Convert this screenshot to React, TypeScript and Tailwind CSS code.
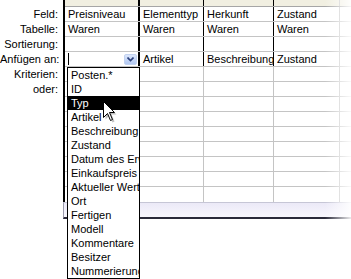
import React from "react";

const labels = ["Feld:", "Tabelle:", "Sortierung:", "Anfügen an:", "Kriterien:", "oder:"];

const items = [
  "Posten.*",
  "ID",
  "Typ",
  "Artikel",
  "Beschreibung",
  "Zustand",
  "Datum des Erwerbs",
  "Einkaufspreis",
  "Aktueller Wert",
  "Ort",
  "Fertigen",
  "Modell",
  "Kommentare",
  "Besitzer",
  "Nummerierung",
];

const topRows: (string | null)[][] = [
  ["Preisniveau", "Elementtyp", "Herkunft", "Zustand"],
  ["Waren", "Waren", "Waren", "Waren"],
  ["", "", "", ""],
  [null, "Artikel", "Beschreibung", "Zustand"],
];

function Cursor() {
  return (
    <svg
      className="absolute left-[103px] top-[101px]"
      width="16"
      height="23"
      viewBox="0 0 16 23"
    >
      <path d="M2.5 2.5 L2.5 18.5 L6.5 14.5 L9.5 21.5 L11.5 20.5 L8.5 13.5 L13.5 13.5 Z" fill="#000" opacity="0.25" />
      <path d="M0.5 0.5 L0.5 16.5 L4.5 12.5 L7.5 19.5 L9.5 18.5 L6.5 11.5 L11.5 11.5 Z" fill="#fff" stroke="#000" strokeWidth="1" strokeLinejoin="miter" />
    </svg>
  );
}

export default function App() {
  const font = { fontFamily: '"Liberation Sans", Arial, sans-serif' };
  return (
    <div className="relative w-[351px] h-[279px] bg-white overflow-hidden text-[11px] text-black" style={font}>
      <div className="flex">
        <div className="w-[63px] shrink-0 pt-[7px]">
          {labels.map((l) => (
            <div key={l} className="h-[15px] leading-[15px] text-right pr-[5px] whitespace-nowrap">
              {l}
            </div>
          ))}
        </div>
        <div className="flex-1 flex flex-col">
          <div className="border-l-2 border-black">
            <div className="grid grid-cols-[75px_64px_70px_66px_1fr] h-[7px] bg-[#f1efe1] border-b border-[#a6a6a6]">
              <div className="border-r-2 border-black" />
              <div className="border-r border-black" />
              <div className="border-r border-black" />
              <div className="border-r border-[#c4c4c4]" />
              <div />
            </div>
            {topRows.map((r, i) => (
              <div key={i} className="grid grid-cols-[75px_64px_70px_66px_1fr] h-[15px] border-b border-[#c4c4c4]">
                {r[0] === null ? (
                  <div className="border-r-2 border-black flex items-center justify-between pl-[3px] pr-[1px]">
                    <div className="w-px h-[12px] bg-black" />
                    <div className="w-[13px] h-[11px] rounded-[2px] bg-gradient-to-b from-[#dbe6fb] to-[#b2c8f2] border border-[#c2d2f0] flex items-center justify-center">
                      <svg width="7" height="5" viewBox="0 0 7 5">
                        <path d="M0.5 0.5 L3.5 3.5 L6.5 0.5" fill="none" stroke="#2a3f7a" strokeWidth="1.6" />
                      </svg>
                    </div>
                  </div>
                ) : (
                  <div className="border-r-2 border-black pl-[3px] leading-[14px] whitespace-nowrap overflow-hidden">{r[0]}</div>
                )}
                <div className="border-r border-black pl-[3px] leading-[14px] whitespace-nowrap overflow-hidden">{r[1]}</div>
                <div className="border-r border-black pl-[3px] leading-[14px] whitespace-nowrap overflow-hidden">{r[2]}</div>
                <div className="border-r border-[#c4c4c4] pl-[3px] leading-[14px] whitespace-nowrap overflow-hidden">{r[3]}</div>
                <div />
              </div>
            ))}
            {Array.from({ length: 9 }).map((_, i) => (
              <div
                key={i}
                className={
                  i === 8
                    ? "grid grid-cols-[75px_64px_70px_66px_1fr] h-[15px]"
                    : "grid grid-cols-[75px_64px_70px_66px_1fr] h-[15px] border-b border-[#c4c4c4]"
                }
              >
                <div className="border-r-2 border-black" />
                <div className="border-r border-[#c4c4c4]" />
                <div className="border-r border-[#c4c4c4]" />
                <div className="border-r border-[#c4c4c4]" />
                <div />
              </div>
            ))}
          </div>
          <div className="h-[17px] border-l border-[#9a9aac] border-t border-t-[#c6c6d6] border-b-2 border-b-[#2a2a3a] bg-gradient-to-b from-[#ebe9f7] to-[#f8f7fd]" />
        </div>
      </div>

      <div className="absolute left-[67px] top-[67px] w-[73px] h-[212px] border border-black bg-white">
        {items.map((it) => (
          <div
            key={it}
            className={
              it === "Typ"
                ? "h-[14px] leading-[14px] pl-[3px] bg-black text-white whitespace-nowrap overflow-hidden"
                : "h-[14px] leading-[14px] pl-[3px] whitespace-nowrap overflow-hidden"
            }
          >
            {it}
          </div>
        ))}
      </div>

      <Cursor />

      <div className="absolute right-0 top-0 w-[26px] h-[222px] bg-gradient-to-r from-transparent to-white/90" />
    </div>
  );
}
